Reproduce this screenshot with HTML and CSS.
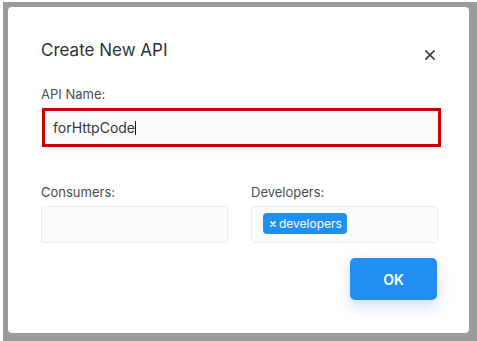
FILE: index.html
```html
<!DOCTYPE html>
<html>
<head>
<meta charset="utf-8">
<link rel="stylesheet" href="styles.css">
</head>
<body>
<div class="frame">
  <div class="dialog">
    <div class="header">
      <div class="title">Create New API</div>
      <svg class="close" width="10" height="10" viewBox="0 0 10 10"><path d="M1 1 L9 9 M9 1 L1 9" stroke="#343a48" stroke-width="1.7" stroke-linecap="square"/></svg>
    </div>
    <div class="label">API Name:</div>
    <div class="name-input"><span class="value">forHttpCode</span><span class="caret"></span></div>
    <div class="cols">
      <div class="col">
        <div class="label">Consumers:</div>
        <div class="box"></div>
      </div>
      <div class="col">
        <div class="label">Developers:</div>
        <div class="box">
          <span class="tag"><svg class="tag-x" width="6" height="6" viewBox="0 0 6 6"><path d="M1 1 L5 5 M5 1 L1 5" stroke="#fff" stroke-width="1.7" stroke-linecap="round"/></svg>developers</span>
        </div>
      </div>
    </div>
    <div class="actions">
      <div class="ok">OK</div>
    </div>
  </div>
</div>
</body>
</html>
```
FILE: styles.css
```css
html, body {
  margin: 0;
  padding: 0;
  background: #ffffff;
}
body {
  font-family: Inter, "Noto Sans", sans-serif;
}
.frame {
  margin: 2px 0 0 3px;
  width: 474px;
  height: 339px;
  box-sizing: border-box;
  background: #9b9b9b;
  padding: 5px 8px 8px 5px;
}
.dialog {
  background: #ffffff;
  border-radius: 4px;
  height: 100%;
  box-sizing: border-box;
  padding: 32px 31px 0 33px;
  display: flex;
  flex-direction: column;
}
.header {
  display: flex;
  justify-content: space-between;
  align-items: flex-start;
  height: 22px;
}
.title {
  font-size: 17px;
  line-height: 22px;
  color: #2f3237;
}
.close {
  margin-top: 11px;
  margin-right: 3px;
}
.label {
  font-size: 13px;
  line-height: 16px;
  color: #4a4d52;
  margin-bottom: 6px;
}
.header + .label {
  margin-top: 25px;
}
.name-input {
  margin-left: 1px;
  width: 399px;
  height: 39px;
  box-sizing: border-box;
  border: 3px solid #c80000;
  background: #fcfcfc;
  display: flex;
  align-items: center;
  padding-left: 8px;
  font-size: 14px;
  color: #33363b;
}
.caret {
  display: inline-block;
  width: 1px;
  height: 14px;
  background: #111;
}
.cols {
  display: flex;
  gap: 23px;
  margin-top: 37px;
}
.col {
  width: 187px;
}
.box {
  height: 37px;
  box-sizing: border-box;
  border: 1px solid #ececec;
  border-radius: 3px;
  background: #fcfcfc;
  padding: 6px 0 0 11px;
  display: flex;
  align-items: flex-start;
}
.tag {
  display: flex;
  align-items: center;
  height: 21px;
  box-sizing: border-box;
  padding: 0 5px 0 7px;
  background: #2090f0;
  border-radius: 4px;
  color: #ffffff;
  font-size: 12px;
  line-height: 21px;
}
.tag-x {
  margin-right: 3px;
}
.actions {
  display: flex;
  justify-content: flex-end;
  margin-top: 15px;
}
.ok {
  width: 87px;
  height: 42px;
  margin-right: 1px;
  border-radius: 5px;
  background: #238ef2;
  color: #ffffff;
  font-size: 14px;
  font-weight: 600;
  display: flex;
  align-items: center;
  justify-content: center;
  box-shadow: 0 7px 14px rgba(50, 110, 240, 0.22);
}
```
